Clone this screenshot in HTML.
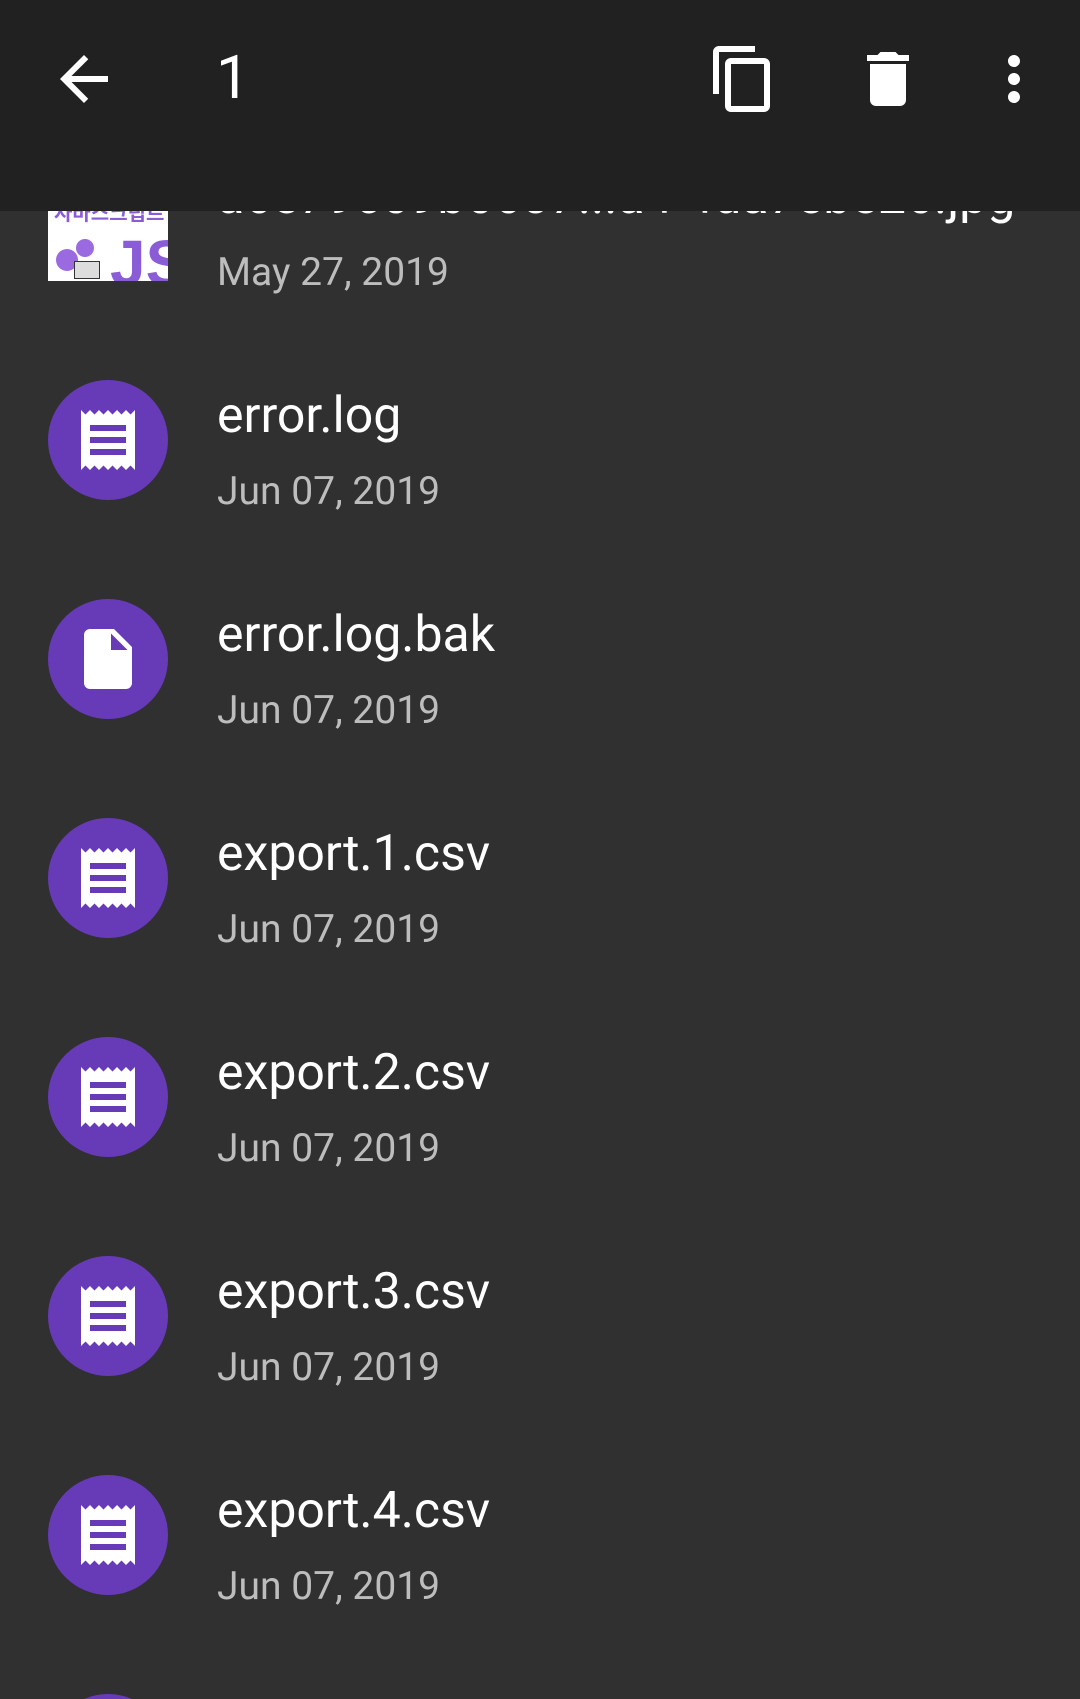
<!DOCTYPE html>
<html style="height:1699px;overflow:hidden"><head><meta charset="utf-8"><style>
body{margin:0;width:1080px;height:1699px;background:#303030;overflow:hidden;position:relative;font-family:"Roboto","Liberation Sans",sans-serif}
.hdr{position:absolute;left:0;top:0;width:1080px;height:211px;background:#212121;z-index:5}
.ic{position:absolute;top:43px;width:72px;height:72px}
.num{position:absolute;left:216px;top:42px;font-size:60px;color:#fff;line-height:72px}
.c{position:absolute;left:48px;width:120px;height:120px;border-radius:50%;background:#673ab7}
.c svg{position:absolute;left:24px;top:24px}
.t{position:absolute;left:217px;font-size:50px;color:#fff;white-space:nowrap;line-height:1}
.d{position:absolute;left:217px;font-size:39px;color:#bdbdbd;white-space:nowrap;line-height:1}
</style></head><body>
<div class="hdr">
<svg class="ic" style="left:48px" viewBox="0 0 24 24"><path fill="#fff" d="M20 11H7.830l5.59-5.59L12 4l-8 8 8 8 1.41-1.41L7.83 13H20v-2z"/></svg>
<div class="num">1</div>
<svg class="ic" style="left:707px" viewBox="0 0 24 24"><path fill="#fff" d="M16 1H4c-1.1 0-2 .9-2 2v14h2V3h12V1zm3 4H8c-1.1 0-2 .9-2 2v14c0 1.1.9 2 2 2h11c1.1 0 2-.9 2-2V7c0-1.1-.9-2-2-2zm0 16H8V7h11v14z"/></svg>
<svg class="ic" style="left:852px" viewBox="0 0 24 24"><path fill="#fff" d="M6 19c0 1.1.9 2 2 2h8c1.1 0 2-.9 2-2V7H6v12zM19 4h-3.5l-1-1h-5l-1 1H5v2h14V4z"/></svg>
<svg class="ic" style="left:978px" viewBox="0 0 24 24"><path fill="#fff" d="M12 8c1.1 0 2-.9 2-2s-.9-2-2-2-2 .9-2 2 .9 2 2 2zm0 2c-1.1 0-2 .9-2 2s.9 2 2 2 2-.9 2-2-.9-2-2-2zm0 6c-1.1 0-2 .9-2 2s.9 2 2 2 2-.9 2-2-.9-2-2-2z"/></svg>
</div>

<div style="position:absolute;left:48px;top:161px;width:120px;height:120px;background:#fff;overflow:hidden">
<div style="position:absolute;left:6px;top:36px;font-family:'Noto Sans CJK KR',sans-serif;font-weight:bold;color:#8a5cd6;font-size:20px;white-space:nowrap">자바스크립트</div>
<div style="position:absolute;left:62px;top:70px;font-family:'Liberation Sans',sans-serif;font-weight:bold;color:#8a5cd6;font-size:64px;line-height:1">JS</div>
<div style="position:absolute;left:8px;top:88px;width:22px;height:22px;border-radius:50%;background:#9c6ae0"></div>
<div style="position:absolute;left:28px;top:78px;width:18px;height:18px;border-radius:50%;background:#9c6ae0"></div>
<div style="position:absolute;left:26px;top:100px;width:24px;height:16px;border:1px solid #333;background:#ddd"></div>
</div>
<div class="t" style="top:172px">a6e79c69b6607...a4 4da7ebe26.jpg</div>
<div class="d" style="top:253px">May 27, 2019</div>

<div class="c" style="top:380px"><svg width="72" height="72" viewBox="0 0 24 24"><path fill="#fff" d="M18 17H6v-2h12v2zm0-4H6v-2h12v2zm0-4H6V7h12v2zM3 22l1.5-1.5L6 22l1.5-1.5L9 22l1.5-1.5L12 22l1.5-1.5L15 22l1.5-1.5L18 22l1.5-1.5L21 22V2l-1.5 1.5L18 2l-1.5 1.5L15 2l-1.5 1.5L12 2l-1.5 1.5L9 2 7.5 3.5 6 2 4.5 3.5 3 2v20z"/></svg></div>
<div class="t" style="top:391px">error.log</div><div class="d" style="top:472px">Jun 07, 2019</div>

<div class="c" style="top:599px"><svg width="72" height="72" viewBox="0 0 24 24"><path fill="#fff" d="M6 2c-1.1 0-1.99.9-1.990 2L4 20c0 1.1.89 2 1.99 2H18c1.1 0 2-.9 2-2V8l-6-6H6zm7 7V3.5L18.5 9H13z"/></svg></div>
<div class="t" style="top:610px">error.log.bak</div><div class="d" style="top:691px">Jun 07, 2019</div>

<div class="c" style="top:818px"><svg width="72" height="72" viewBox="0 0 24 24"><path fill="#fff" d="M18 17H6v-2h12v2zm0-4H6v-2h12v2zm0-4H6V7h12v2zM3 22l1.5-1.5L6 22l1.5-1.5L9 22l1.5-1.5L12 22l1.5-1.5L15 22l1.5-1.5L18 22l1.5-1.5L21 22V2l-1.5 1.5L18 2l-1.5 1.5L15 2l-1.5 1.5L12 2l-1.5 1.5L9 2 7.5 3.5 6 2 4.5 3.5 3 2v20z"/></svg></div>
<div class="t" style="top:829px">export.1.csv</div><div class="d" style="top:910px">Jun 07, 2019</div>

<div class="c" style="top:1037px"><svg width="72" height="72" viewBox="0 0 24 24"><path fill="#fff" d="M18 17H6v-2h12v2zm0-4H6v-2h12v2zm0-4H6V7h12v2zM3 22l1.5-1.5L6 22l1.5-1.5L9 22l1.5-1.5L12 22l1.5-1.5L15 22l1.5-1.5L18 22l1.5-1.5L21 22V2l-1.5 1.5L18 2l-1.5 1.5L15 2l-1.5 1.5L12 2l-1.5 1.5L9 2 7.5 3.5 6 2 4.5 3.5 3 2v20z"/></svg></div>
<div class="t" style="top:1048px">export.2.csv</div><div class="d" style="top:1129px">Jun 07, 2019</div>

<div class="c" style="top:1256px"><svg width="72" height="72" viewBox="0 0 24 24"><path fill="#fff" d="M18 17H6v-2h12v2zm0-4H6v-2h12v2zm0-4H6V7h12v2zM3 22l1.5-1.5L6 22l1.5-1.5L9 22l1.5-1.5L12 22l1.5-1.5L15 22l1.5-1.5L18 22l1.5-1.5L21 22V2l-1.5 1.5L18 2l-1.5 1.5L15 2l-1.5 1.5L12 2l-1.5 1.5L9 2 7.5 3.5 6 2 4.5 3.5 3 2v20z"/></svg></div>
<div class="t" style="top:1267px">export.3.csv</div><div class="d" style="top:1348px">Jun 07, 2019</div>

<div class="c" style="top:1475px"><svg width="72" height="72" viewBox="0 0 24 24"><path fill="#fff" d="M18 17H6v-2h12v2zm0-4H6v-2h12v2zm0-4H6V7h12v2zM3 22l1.5-1.5L6 22l1.5-1.5L9 22l1.5-1.5L12 22l1.5-1.5L15 22l1.5-1.5L18 22l1.5-1.5L21 22V2l-1.5 1.5L18 2l-1.5 1.5L15 2l-1.5 1.5L12 2l-1.5 1.5L9 2 7.5 3.5 6 2 4.5 3.5 3 2v20z"/></svg></div>
<div class="t" style="top:1486px">export.4.csv</div><div class="d" style="top:1567px">Jun 07, 2019</div>

<div style="position:absolute;left:48px;top:1694px;width:120px;height:5px;overflow:hidden"><div style="width:120px;height:120px;border-radius:50%;background:#673ab7"></div></div>
</body></html>
